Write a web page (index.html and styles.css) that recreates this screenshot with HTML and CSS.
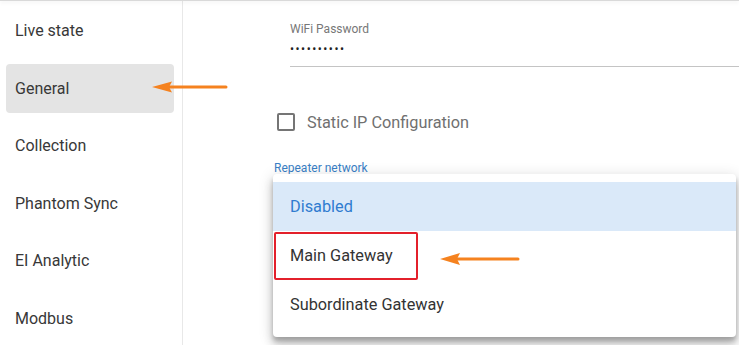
FILE: index.html
```html
<!DOCTYPE html>
<html>
<head>
<meta charset="utf-8">
<link rel="stylesheet" href="styles.css">
</head>
<body>
<div class="app">
  <div class="topline"></div>
  <div class="layout">
    <nav class="sidebar">
      <div class="nav-item">Live state</div>
      <div class="nav-item active">General</div>
      <div class="nav-item">Collection</div>
      <div class="nav-item">Phantom Sync</div>
      <div class="nav-item">EI Analytic</div>
      <div class="nav-item">Modbus</div>
      <svg class="arrow arrow-nav" width="80" height="14" viewBox="0 0 80 14">
        <line x1="16" y1="7" x2="74" y2="7" stroke="#f5821f" stroke-width="3" stroke-linecap="round"/>
        <polygon points="0,7 20,1.5 17,7 20,12.5" fill="#f5821f"/>
      </svg>
    </nav>
    <main class="main">
      <div class="pw-field">
        <div class="field-label">WiFi Password</div>
        <div class="field-value">••••••••••</div>
      </div>
      <label class="check-row">
        <span class="checkbox"></span>
        <span class="check-label">Static IP Configuration</span>
      </label>
      <div class="select-label">Repeater network</div>

      <div class="menu">
        <div class="menu-item selected">Disabled</div>
        <div class="menu-item">Main Gateway</div>
        <div class="menu-item">Subordinate Gateway</div>
        <div class="highlight-box"></div>
        <svg class="arrow arrow-menu" width="84" height="14" viewBox="0 0 84 14">
          <line x1="16" y1="7" x2="78" y2="7" stroke="#f5821f" stroke-width="3" stroke-linecap="round"/>
          <polygon points="0,7 20,1 17,7 20,13" fill="#f5821f"/>
        </svg>
      </div>
    </main>
  </div>
</div>
</body>
</html>
```
FILE: styles.css
```css
* { box-sizing: border-box; }
html, body {
  margin: 0;
  padding: 0;
  width: 739px;
  height: 345px;
  overflow: hidden;
  background: #fff;
  font-family: Roboto, "Noto Sans", "Liberation Sans", sans-serif;
}
.app {
  display: flex;
  flex-direction: column;
  height: 345px;
}
.topline {
  height: 1px;
  background: #d9d9d9;
  box-shadow: 0 1px 4px rgba(0,0,0,0.14);
  position: relative;
  z-index: 2;
  flex: none;
}
.layout {
  flex: 1;
  display: flex;
  min-height: 0;
}
.sidebar {
  width: 183px;
  flex: none;
  border-right: 1px solid #e8e8e8;
  padding-top: 5px;
  display: flex;
  flex-direction: column;
  gap: 8.5px;
  position: relative;
}
.nav-item {
  height: 49px;
  margin-left: 6px;
  width: 168px;
  padding-left: 9px;
  display: flex;
  align-items: center;
  font-size: 16px;
  color: #383838;
  border-radius: 4px;
  flex: none;
}
.nav-item.active {
  background: #e4e4e4;
}
.arrow {
  position: absolute;
}
.arrow-nav {
  left: 152px;
  top: 79px;
}
.main {
  flex: 1;
  position: relative;
  padding-top: 21px;
}
.pw-field {
  margin-left: 107px;
  border-bottom: 1px solid #c4c4c4;
  padding-bottom: 7px;
}
.field-label {
  font-size: 12px;
  line-height: 14px;
  color: #777;
}
.field-value {
  margin-top: 3px;
  font-size: 12px;
  line-height: 20px;
  letter-spacing: 1.5px;
  color: #222;
}
.check-row {
  display: flex;
  align-items: center;
  margin-top: 46px;
  margin-left: 94px;
  height: 18px;
}
.checkbox {
  width: 18px;
  height: 18px;
  border: 2px solid #757575;
  border-radius: 2px;
  flex: none;
}
.check-label {
  margin-left: 12px;
  font-size: 16.3px;
  color: #707070;
}
.select-label {
  margin-top: 30px;
  margin-left: 91px;
  font-size: 12px;
  line-height: 14px;
  color: #3a7fc6;
}
.menu {
  position: absolute;
  left: 90px;
  top: 173px;
  width: 463px;
  padding: 8px 0;
  background: #fff;
  border-radius: 4px;
  box-shadow: 0 4px 4px 0 rgba(0,0,0,0.2), 0 8px 10px 1px rgba(0,0,0,0.14), 0 3px 14px 2px rgba(0,0,0,0.12);
  z-index: 3;
}
.menu-item {
  height: 49px;
  display: flex;
  align-items: center;
  padding-left: 17px;
  font-size: 16.3px;
  color: #333;
}
.menu-item.selected {
  background: #dae9f9;
  color: #2f7cd0;
}
.highlight-box {
  position: absolute;
  left: 1px;
  top: 58px;
  width: 144px;
  height: 48px;
  border: 2px solid #e3202b;
  border-radius: 2px;
}
.arrow-menu {
  left: 167px;
  top: 78px;
}
```
